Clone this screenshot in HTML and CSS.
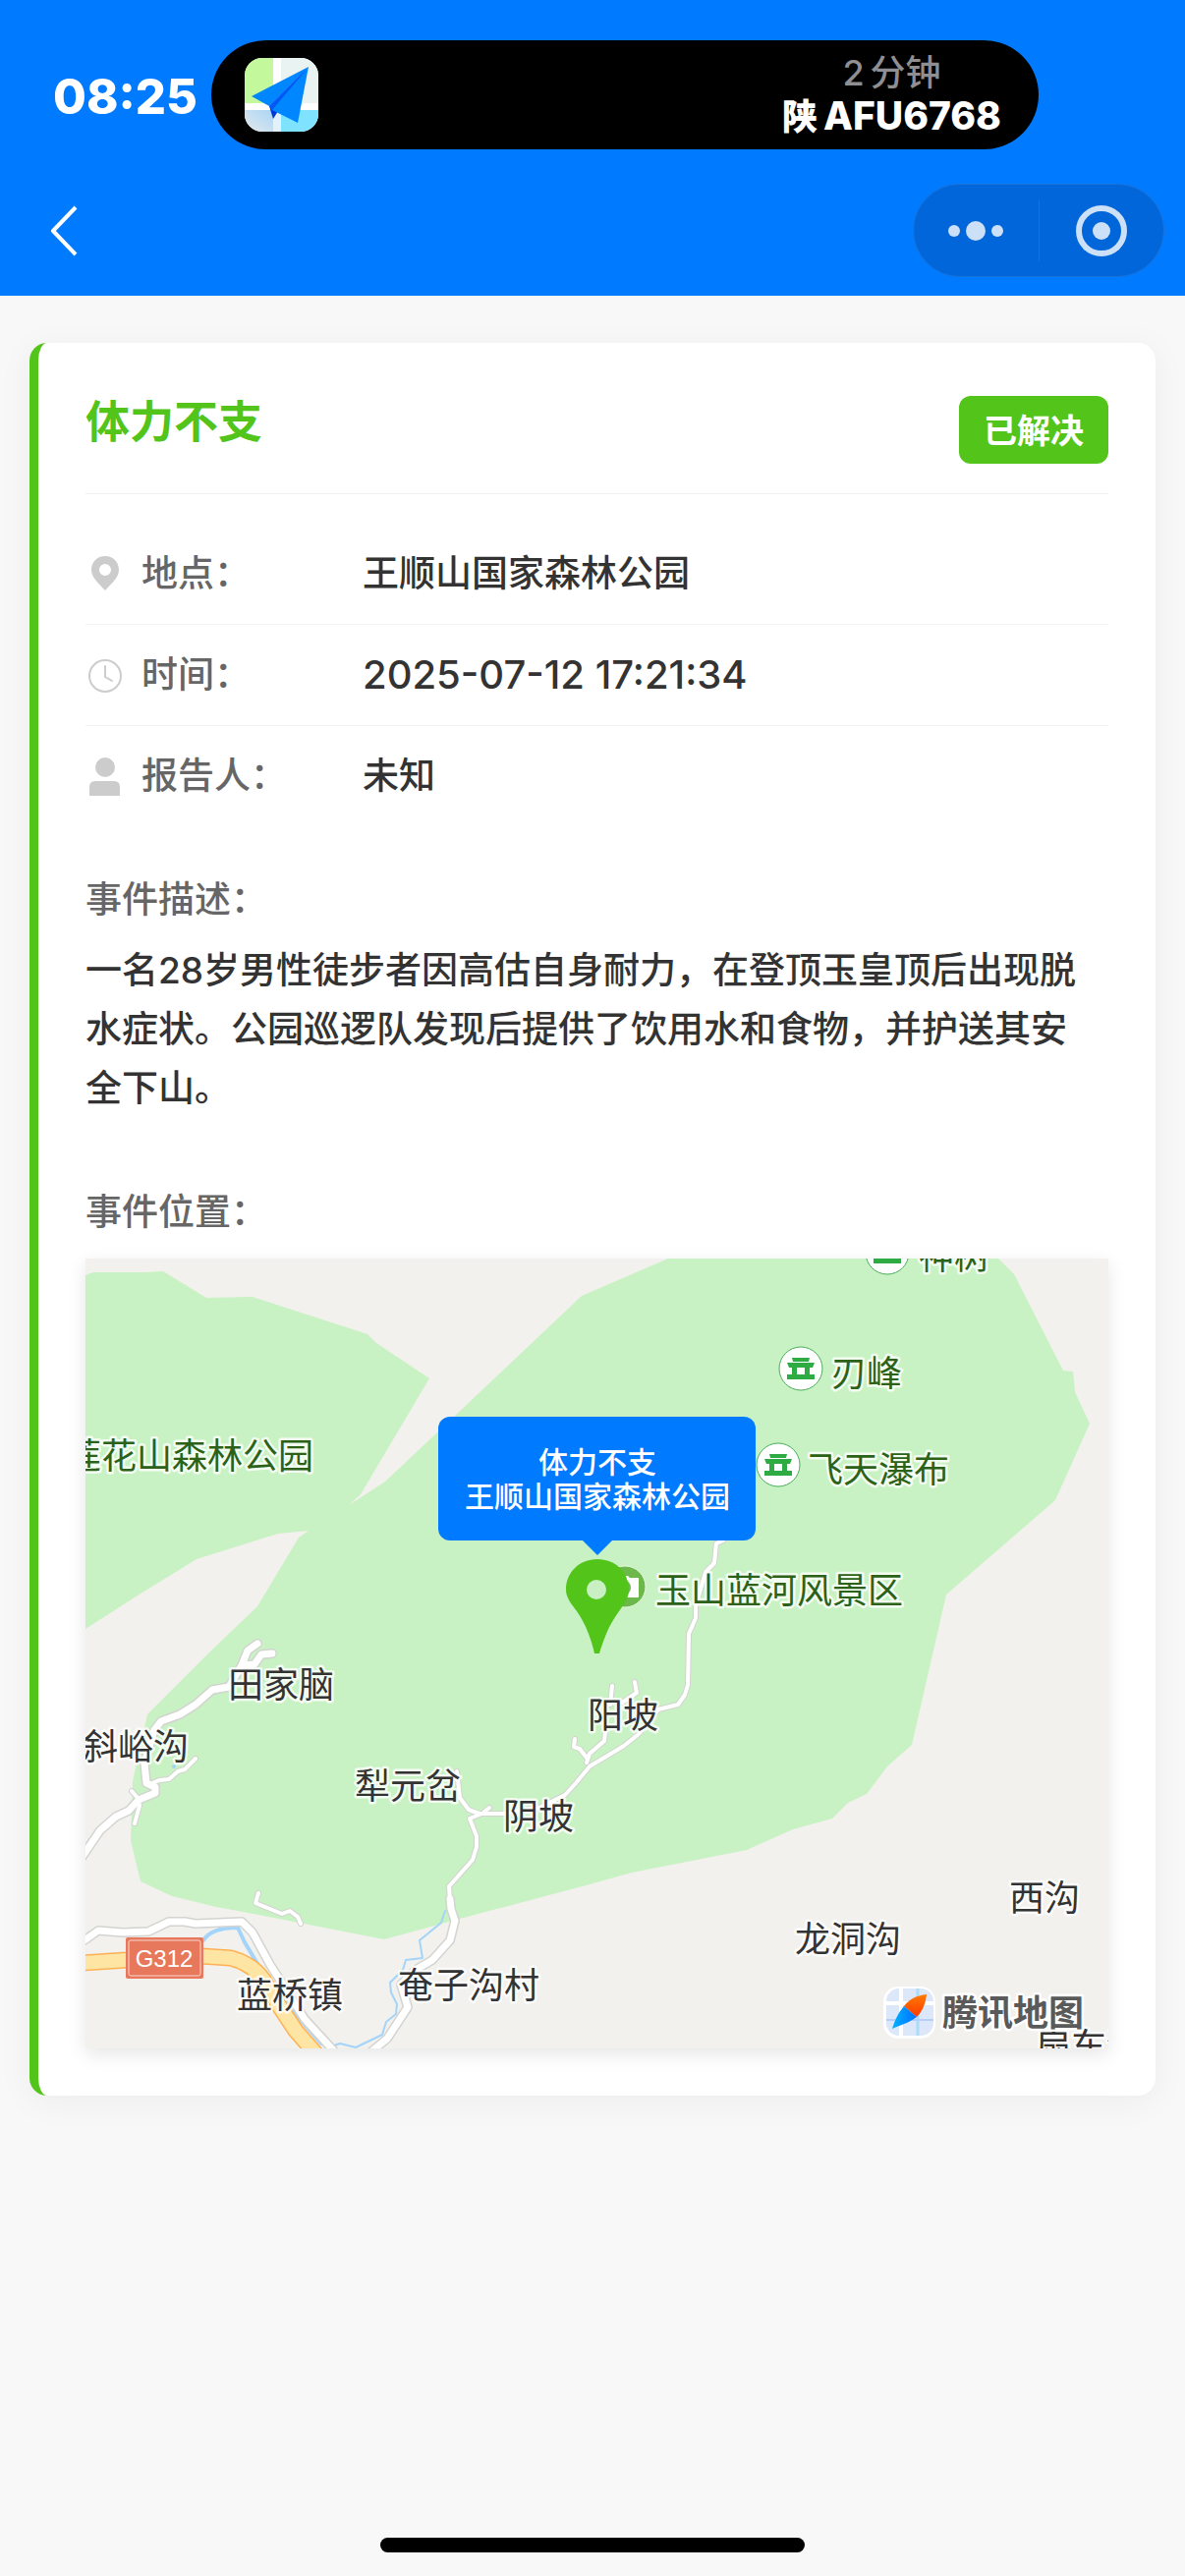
FILE: index.html
```html
<!DOCTYPE html>
<html lang="zh-CN">
<head>
<meta charset="utf-8">
<meta name="viewport" content="width=device-width, initial-scale=1">
<title>体力不支</title>
<link rel="stylesheet" href="styles.css">
</head>
<body>
<header class="top">
  <div class="status">
    <time class="clock">08:25</time>
    <div class="island">
      <svg class="app-icon" viewBox="0 0 75 75" aria-hidden="true">
        <defs>
          <clipPath id="app-clip"><rect width="75" height="75" rx="18"/></clipPath>
          <linearGradient id="app-haze" x1="0" y1="1" x2="1" y2="0"><stop offset="0" stop-color="#e4e9ec"/><stop offset="1" stop-color="#a9d5f5"/></linearGradient>
        </defs>
        <g clip-path="url(#app-clip)">
          <rect width="75" height="75" fill="#fff"/>
          <rect width="29" height="46" fill="#c3f99c"/>
          <rect x="37" width="38" height="46" fill="#e9f3f2"/>
          <rect y="53" width="29" height="22" fill="url(#app-haze)"/>
          <rect x="29" y="53" width="8" height="22" fill="#e3f1fa"/>
          <rect x="37" y="53" width="38" height="22" fill="#7fe3ff"/>
          <path d="M65 9 25 49l4 13 5-8z" fill="#0037d8"/>
          <path d="M65 9 7 39l18 10z" fill="#0087ff"/>
          <path d="M65 9 25 49l3 5z" fill="#0058f5"/>
          <path d="M65 9 28 53l26 13z" fill="#0087ff"/>
        </g>
      </svg>
      <div class="trip">
        <span class="trip-time"><span class="num">2</span>分钟</span>
        <span class="trip-plate"><span class="region">陕</span>AFU6768</span>
      </div>
    </div>
  </div>
  <nav class="nav">
    <button class="back" type="button" aria-label="返回">
      <svg viewBox="0 0 30 54" aria-hidden="true"><path d="M27 3 4 27l23 24" fill="none" stroke="#fff" stroke-width="4" stroke-linejoin="round"/></svg>
    </button>
    <div class="capsule">
      <button type="button" aria-label="更多">
        <svg viewBox="0 0 56 56" aria-hidden="true"><g fill="#cce0f7"><circle cx="6" cy="28" r="6"/><circle cx="28" cy="28" r="10"/><circle cx="50" cy="28" r="6"/></g></svg>
      </button>
      <button type="button" aria-label="关闭">
        <svg viewBox="0 0 56 56" aria-hidden="true"><circle cx="28" cy="28" r="23" fill="none" stroke="#cce0f7" stroke-width="6"/><circle cx="28" cy="28" r="9" fill="#cce0f7"/></svg>
      </button>
    </div>
  </nav>
</header>

<main class="card">
  <div class="card-head">
    <h1>体力不支</h1>
    <span class="badge">已解决</span>
  </div>
  <dl class="info">
    <div class="row">
      <dt><svg viewBox="0 0 39 39" aria-hidden="true"><path fill="#ccc" fill-rule="evenodd" d="M20 2c-8 0-14 6-14 14 0 8 7 13 14 21 7-8 14-13 14-21 0-8-6-14-14-14zm0 8a6 6 0 1 1 0 12 6 6 0 0 1 0-12z"/></svg>地点：</dt>
      <dd>王顺山国家森林公园</dd>
    </div>
    <div class="row">
      <dt><svg viewBox="0 0 39 39" aria-hidden="true"><g fill="none" stroke="#ccc" stroke-width="2"><circle cx="20" cy="20" r="16"/><path d="M20 10v11l7 4" stroke-linecap="round"/></g></svg>时间：</dt>
      <dd class="date">2025-07-12 17:21:34</dd>
    </div>
    <div class="row">
      <dt><svg viewBox="0 0 39 39" aria-hidden="true"><g fill="#ccc"><circle cx="20" cy="10" r="10"/><path d="M4 39V30q0-6 6-6h19q6 0 6 6v9z"/></g></svg>报告人：</dt>
      <dd>未知</dd>
    </div>
  </dl>
  <section class="block">
    <h2>事件描述：</h2>
    <p>一名28岁男性徒步者因高估自身耐力，在登顶玉皇顶后出现脱水症状。公园巡逻队发现后提供了饮用水和食物，并护送其安全下山。</p>
  </section>
  <section class="block">
    <h2>事件位置：</h2>
    <svg class="map" viewBox="0 0 1041 804" preserveAspectRatio="xMidYMid slice" role="img" aria-label="事件位置地图">
      <defs>
        <g id="poi">
          <circle r="22" fill="#fff" stroke="#4bae5c" stroke-width="1"/>
          <path fill="#2eab42" d="M-9-11H9L8-7H-8zM-14-6H14L12-1H9V6H14V11H-14V6H-9V-1H-12zM-4-1V6H4V-1z" fill-rule="evenodd"/>
        </g>
        <linearGradient id="needle-n" x1="0" y1="0" x2="0" y2="1"><stop offset="0" stop-color="#ff7a00"/><stop offset="1" stop-color="#ff3a00"/></linearGradient>
        <linearGradient id="needle-s" x1="0" y1="0" x2="1" y2="0"><stop offset="0" stop-color="#00b2ff"/><stop offset="1" stop-color="#0070ff"/></linearGradient>
        <path id="lanes" d="M68 534 75 531 85 530 94 522 101 520 112 509M47 542 53 549 55 557 50 575M176 646 173 656 200 667 208 664 216 670 219 677M649 287 642 290 640 310 631 319 621 354V366L614 382 613 434 610 444 603 454 583 459 563 484 548 496 513 517 499 534 488 546 462 559 425 565H401L390 561 381 549 378 522M406 563 411 559M401 566 391 570 398 588V599L394 612 370 639 371 654M536 435 534 454M559 431 561 442 546 452M529 482 528 491 513 504 510 513M498 489 497 497 503 499 510 508"/>
        <path id="roads" d="M-4 610 0 604 15 582 31 568 44 562 54 551 71 544V538L62 534 60 514 70 480 77 471 96 464 112 454 129 439 146 436 159 414 165 399 175 392M159 414 172 413 179 403 190 402M371 652 372 662 376 674 371 694 353 714 336 724 321 739 328 762 307 794 290 808M-4 696 13 684 38 686 64 685 85 675H101L112 677 159 675 170 686 188 719 199 736 223 774 256 810"/>
        <path id="highway" d="M-4 717 42 714Q80 710 118 710L148 712Q170 718 181 734L198 762 214 786 235 810"/>
      </defs>
      <rect width="1041" height="804" fill="#f2f1ed"/>
      <path fill="#c8f2c3" d="M0 17 8 14H61L79 13 123 40 170 39 287 77 296 86 350 122 280 240 268 251 305 227 375 161 505 38 593 0H929L945 16 995 114 1005 115 1007 136 1022 168 987 246 876 342 863 399 841 495 816 517 795 545 776 554 760 570 720 581 673 602 556 625 513 637 381 672 304 693 155 664 133 660 88 649 56 634 46 592 48 532 63 464 128 399 175 354 217 284 227 277 196 280 113 306 53 343 0 377z"/>
      <g fill="none" stroke-linejoin="round" stroke-linecap="round">
        <path stroke="#a4d4f9" stroke-width="4" d="M120 694Q128 681 155 681L162 696 177 721 209 764 240 799"/>
        <path stroke="#a4d4f9" stroke-width="2" d="M366 664 362 676 340 694 343 712 326 714 323 724 310 737 311 747 317 759 316 769 306 777 302 790 275 803 259 799 253 801"/>
        <use href="#lanes" stroke="#d3d3d0" stroke-width="6"/>
        <use href="#roads" stroke="#d3d3d0" stroke-width="10"/>
        <use href="#highway" stroke="#ffb053" stroke-width="17"/>
        <use href="#highway" stroke="#ffe5a3" stroke-width="14"/>
        <use href="#lanes" stroke="#fff" stroke-width="4"/>
        <use href="#roads" stroke="#fff" stroke-width="7"/>
      </g>
      <circle cx="90" cy="517" r="2" fill="#a4d4f9"/>
      <g class="place">
        <text x="145" y="447">田家脑</text>
        <text x="-3" y="510">斜峪沟</text>
        <text x="274" y="550">犁元岔</text>
        <text x="425" y="581">阴坡</text>
        <text x="511" y="478">阳坡</text>
        <text x="940" y="664">西沟</text>
        <text x="722" y="706">龙洞沟</text>
        <text x="154" y="763">蓝桥镇</text>
        <text x="318" y="753">奄子沟村</text>
        <text x="967" y="815">扇车沟</text>
      </g>
      <g class="place scenic">
        <text x="232" y="214" text-anchor="end">莲花山森林公园</text>
        <text x="848" y="11">神树</text>
        <text x="759" y="130">刃峰</text>
        <text x="735" y="228">飞天瀑布</text>
        <text x="580" y="351">玉山蓝河风景区</text>
      </g>
      <use href="#poi" x="816" y="-6"/>
      <use href="#poi" x="728" y="112"/>
      <use href="#poi" x="705" y="210"/>
      <rect x="41" y="691" width="79" height="42" rx="2" fill="#e8785c"/>
      <rect x="44" y="694" width="73" height="36" rx="2" fill="none" stroke="#fff" stroke-opacity=".7"/>
      <text class="road-no" x="80" y="721" text-anchor="middle">G312</text>

      <circle cx="549" cy="334" r="21" fill="#6cb84b" stroke="#e4f5de" stroke-width="1"/>
      <path fill="#fff" d="M536 327h9l3-4h4l2 2h9v20h-27z"/>
      <circle cx="547" cy="335" r="8" fill="#6cb84b"/>
      <path fill="#52c41a" d="M521 306C502 306 489 320 489 337 489 345 494 351 500 359 505 366 509 374 512 382 515 390 517 397 518 402H523C524 397 527 390 530 382 533 374 538 366 543 359 549 351 553 345 553 337 553 320 540 306 521 306z"/>
      <circle cx="520" cy="337" r="10" fill="#c8f0c3"/>

      <rect x="359" y="161" width="323" height="126" rx="12" fill="#007aff"/>
      <path fill="#007aff" d="M505 286H537L521 302z"/>
      <g class="callout" text-anchor="middle">
        <text x="521" y="218">体力不支</text>
        <text x="521" y="253">王顺山国家森林公园</text>
      </g>

      <rect x="812" y="741" width="53" height="53" rx="15" fill="#fff"/>
      <rect x="815" y="743" width="48" height="48" rx="13" fill="#dce7fa"/>
      <path stroke="#fff" stroke-width="4" d="M830 743V791M815 758H863"/>
      <path stroke="#a9dcf8" stroke-width="3" d="M847 743V791"/>
      <path stroke="#b7cdfa" stroke-width="2" d="M815 775H863"/>
      <path fill="url(#needle-n)" d="M856 749C846 750 838 754 833 761L846 772C852 766 855 758 856 749z"/>
      <path fill="url(#needle-s)" d="M833 761 846 772C838 778 830 780 821 784C824 775 827 768 833 761z"/>
      <text class="brand" x="872" y="781">腾讯地图</text>
    </svg>
  </section>
</main>
<footer class="home"><div class="home-bar"></div></footer>
</body>
</html>
```

FILE: styles.css
```css
* {
  box-sizing: border-box;
}

body {
  margin: 0;
  min-height: 100vh;
  display: flex;
  flex-direction: column;
  background: #f8f8f8;
  color: #333;
  font-family: Inter, "Noto Sans CJK SC", sans-serif;
  font-size: 37px;
  font-weight: 500;
  line-height: 60px;
}

button {
  border: 0;
  padding: 0;
  background: none;
  font: inherit;
  cursor: pointer;
}

h1,
h2,
p,
dl,
dd {
  margin: 0;
}

svg {
  display: block;
  flex: none;
}

/* Status bar and navigation */
.top {
  background: #007aff;
  color: #fff;
  padding: 41px 21px 19px 50px;
}

.status {
  display: flex;
  align-items: center;
  padding-right: 128px;
}

.clock {
  width: 165px;
  padding: 4px 0 0 4px;
  font-size: 49px;
  font-weight: 800;
}

.island {
  flex: 1;
  display: flex;
  align-items: center;
  justify-content: space-between;
  height: 111px;
  padding: 0 38px 0 34px;
  border-radius: 56px;
  background: #000;
}

.app-icon {
  width: 75px;
  height: 75px;
}

.trip {
  display: flex;
  flex-direction: column;
  align-items: center;
  font-size: 36px;
  line-height: 44px;
}

.trip-time {
  color: #8e8e93;
}

.trip-plate {
  font-size: 39px;
  font-weight: 800;
}

.num {
  margin-right: 6px;
}

.region {
  margin-right: 6px;
  font-size: 36px;
}

.nav {
  display: flex;
  align-items: center;
  justify-content: space-between;
  padding-top: 35px;
}

.back svg {
  width: 30px;
  height: 54px;
}

.capsule {
  display: flex;
  align-items: center;
  width: 256px;
  height: 95px;
  border: 1px solid #1a73db;
  border-radius: 48px;
  background: #0066d9;
}

.capsule button {
  flex: 1;
  display: flex;
  justify-content: center;
}

.capsule button + button {
  padding: 3px 0;
  border-left: 1px solid #1a73db;
}

.capsule svg {
  width: 56px;
  height: 56px;
}

/* Event card */
.card {
  margin: 48px 30px;
  padding: 54px 48px 48px;
  border-left: 9px solid #52c41a;
  border-radius: 18px;
  background: #fff;
  box-shadow: 0 6px 36px rgba(0, 0, 0, 0.05);
}

.card-head {
  display: flex;
  align-items: flex-start;
  justify-content: space-between;
  padding-bottom: 30px;
  border-bottom: 1px solid #f0f0f0;
}

h1 {
  color: #52c41a;
  font-size: 45px;
  font-weight: 700;
  line-height: 54px;
}

.badge {
  padding: 10px 25px 8px;
  border-radius: 12px;
  background: #52c41a;
  color: #fff;
  font-size: 34px;
  font-weight: 700;
  line-height: 51px;
}

.info {
  padding-top: 29px;
}

.row {
  display: flex;
  align-items: center;
  height: 103px;
}

.row + .row {
  border-top: 1px solid #f2f2f2;
}

dt {
  display: flex;
  align-items: center;
  gap: 18px;
  width: 282px;
  color: #666;
}

dt svg {
  width: 39px;
  height: 39px;
}

.date {
  font-size: 40px;
}

.block h2 {
  color: #666;
  font-size: 37px;
  font-weight: 500;
}

.info + .block {
  margin-top: 45px;
}

.block + .block {
  margin-top: 66px;
}

.block p {
  padding: 12px 12px 0 0;
}

.map {
  width: 100%;
  height: 804px;
  margin-top: 17px;
  background: #f2f1ed;
  box-shadow: 0 6px 18px rgba(0, 0, 0, 0.1);
}

/* Map lettering */
.place {
  fill: #333;
  font-size: 36px;
  font-weight: 400;
  stroke: #fff;
  stroke-opacity: 0.8;
  stroke-width: 5px;
  stroke-linejoin: round;
  paint-order: stroke;
}

.scenic {
  fill: #2b6217;
}

.road-no {
  fill: #fff;
  font-family: "Liberation Sans", sans-serif;
  font-size: 24px;
  font-weight: 400;
}

.callout {
  fill: #fff;
  font-size: 30px;
}

.brand {
  fill: #5a5a5a;
  font-size: 36px;
  font-weight: 700;
  stroke: #fff;
  stroke-width: 5px;
  stroke-linejoin: round;
  paint-order: stroke;
}

/* Home indicator */
.home {
  display: flex;
  justify-content: center;
  margin-top: auto;
  padding-bottom: 24px;
}

.home-bar {
  width: 432px;
  height: 15px;
  border-radius: 8px;
  background: #000;
}
```
